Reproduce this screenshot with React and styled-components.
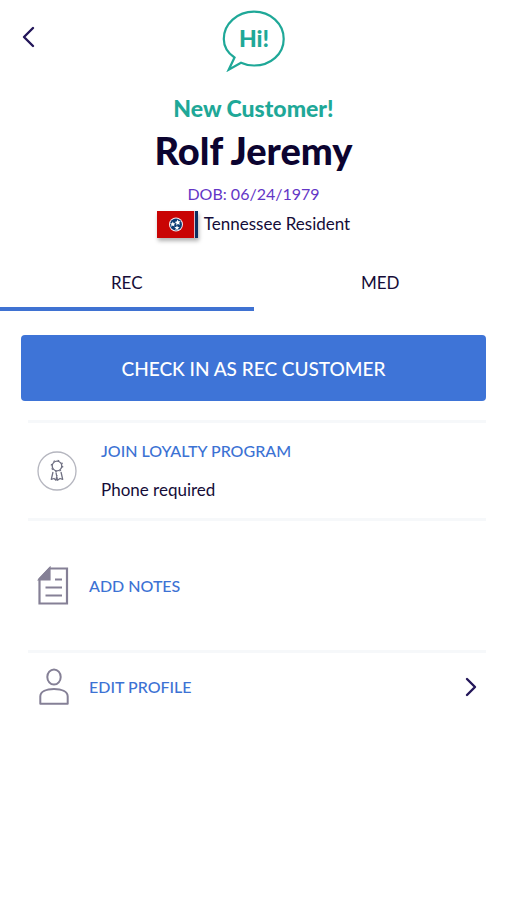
import React, { useState } from 'react'
import styled, { createGlobalStyle } from 'styled-components'

const GlobalStyle = createGlobalStyle`
* {
box-sizing: border-box;
}
body {
margin: 0;
background: #fff;
color: #150c38;
font-family: Lato, 'Open Sans', sans-serif;
}
button {
font-family: inherit;
color: inherit;
background: none;
border: none;
padding: 0;
cursor: pointer;
}
`;

const Page = styled.div`
width: 100%;
`;

const TopBar = styled.header`
display: grid;
grid-template-columns: 1fr auto 1fr;
align-items: start;
padding: 10px 20px 0;
`;

const BackButton = styled.button`
justify-self: start;
display: flex;
margin-top: 16px;
`;

const Customer = styled.section`
display: flex;
flex-direction: column;
align-items: center;
padding-top: 22px;
`;

const Status = styled.p`
margin: 0;
font-size: 23px;
line-height: 28px;
font-weight: 900;
color: #1fa898;
`;

const Name = styled.h1`
margin: 8px 0 0;
font-size: 38px;
line-height: 40px;
font-weight: 900;
color: #0c0430;
`;

const Birth = styled.p`
margin: 14px 0 0;
font-size: 16px;
line-height: 20px;
color: #6336c6;
`;

const Residence = styled.div`
display: flex;
align-items: center;
gap: 6px;
margin-top: 6px;
font-size: 17px;
line-height: 28px;
`;

const Flag = styled.svg`
display: block;
box-shadow: 1px 3px 4px rgba(0, 0, 0, 0.3);
`;

const Tabs = styled.div`
display: grid;
grid-template-columns: 1fr 1fr;
margin-top: 17px;
`;

const Tab = styled.button`
height: 56px;
padding-top: 4px;
font-size: 17px;
line-height: 20px;
border-bottom: 4px solid ${(props) => props.$active ? '#3f72d2' : 'transparent'};
`;

const Content = styled.main`
padding: 24px 21px;
`;

const CheckIn = styled.button`
display: block;
width: 100%;
height: 66px;
border-radius: 4px;
background: #3e74d7;
color: #fff;
font-size: 19px;
font-weight: 500;
`;

const List = styled.div`
margin: 19px 0 0 7px;
`;

const Row = styled.button`
display: flex;
align-items: center;
gap: ${(props) => props.$gap || '19px'};
width: 100%;
height: ${(props) => props.$height};
padding: 0 7px 0 8px;
border-top: 3px solid #f6f8fa;
text-align: left;
`;

const Texts = styled.span`
flex: 1;
display: flex;
flex-direction: column;
gap: 19px;
`;

const Label = styled.span`
font-size: 16px;
line-height: 20px;
font-weight: 500;
color: #3c72d4;
`;

const Info = styled.span`
font-size: 17px;
line-height: 20px;
`;

const Chevron = ({ left }) => (
  <svg width="16" height="22" viewBox="0 0 16 22" fill="none" stroke="#231659" strokeWidth="2.4" strokeLinecap="round" strokeLinejoin="round" aria-hidden="true">
    <path d={left ? 'M13 2L4 11L13 20' : 'M4 3L12 11L4 19'} />
  </svg>
);

const HiBubble = () => (
  <svg width="64" height="62" viewBox="0 0 64 62" role="img" aria-label="Hi!">
    <path
      d="M12.5 47.5C6 43 1.800 36.500 1.800 28.900C1.800 13.900 15.300 1.700 32 1.700C48.700 1.700 61.700 13.900 61.700 28.900C61.700 43.900 48.700 55.500 32 55.500C27.300 55.500 22.800 54.500 19 52.700L6.700 59.700Z"
      fill="#fff"
      stroke="#1fa898"
      strokeWidth="2.200"
    />
    <text x="32" y="37" textAnchor="middle" fontFamily="Lato, sans-serif" fontSize="23" fontWeight="900" fill="#1fa898">Hi!</text>
  </svg>
);

const TennesseeFlag = () => (
  <Flag width="41" height="27" viewBox="0 0 41 27" aria-hidden="true">
    <rect width="41" height="27" fill="#c90404" />
    <rect x="37" width="4" height="27" fill="#d9b8c4" />
    <rect x="38" width="3" height="27" fill="#0c2f60" />
    <circle cx="19" cy="13.500" r="7" fill="#f5e8ec" />
    <circle cx="19" cy="13.500" r="6" fill="#0c3b73" />
    <g fill="#fff">
      <path d="M20.500 8.500l1 1.800 2-.1-1.300 1.600.7 1.900-2-.7-1.600 1.200.1-2-1.700-1.200 2-.5z" />
      <path d="M15.800 10.500l.8 1.800 1.900.1-1.500 1.300.5 1.900-1.700-1-1.700 1.100.4-2-1.500-1.200 2-.2z" />
      <path d="M20 14.300l.7 1.700 1.900.1-1.500 1.200.5 1.900-1.600-1-1.700 1 .5-1.900-1.500-1.200 2-.1z" />
    </g>
  </Flag>
);

const RibbonIcon = () => (
  <svg width="42" height="42" viewBox="0 0 42 42" fill="none" stroke="#6f7082" strokeWidth="1.300" strokeLinejoin="round" aria-hidden="true">
    <circle cx="21" cy="21" r="19" stroke="#b5b6bf" />
    <circle cx="21" cy="16" r="4.800" />
    <circle cx="21" cy="16" r="5.700" strokeWidth="1.200" strokeDasharray="1.600 2.877" />
    <path d="M17 22L15.300 29.300L18 28.500L20 30.200L21 25M25 22L26.700 29.300L24 28.500L21.500 30.200L20 22.500" />
  </svg>
);

const NoteIcon = () => (
  <svg width="34" height="40" viewBox="0 0 34 40" fill="none" stroke="#858096" strokeWidth="2.200" aria-hidden="true">
    <path d="M13.500 2.500H31V37.500H3.500V13Z" />
    <path d="M13.500 2.500V13.500H3.500Z" fill="#858096" />
    <path d="M19 13.500H26M9.500 21.500H26M9.500 29.500H26" />
  </svg>
);

const ProfileIcon = () => (
  <svg width="34" height="40" viewBox="0 0 34 40" fill="none" stroke="#858096" strokeWidth="2" strokeLinejoin="round" aria-hidden="true">
    <ellipse cx="18" cy="10" rx="6.700" ry="7.500" />
    <path d="M4.300 36.800V29.500C4.300 24.300 10.500 22 18 22S31.700 24.300 31.700 29.500V36.800Z" />
  </svg>
);

export default function App() {
  const [tab, setTab] = useState('REC');

  return (
    <Page>
      <GlobalStyle />
      <TopBar>
        <BackButton aria-label="Back"><Chevron left /></BackButton>
        <HiBubble />
      </TopBar>
      <Customer>
        <Status>New Customer!</Status>
        <Name>Rolf Jeremy</Name>
        <Birth>DOB: 06/24/1979</Birth>
        <Residence>
          <TennesseeFlag />
          Tennessee Resident
        </Residence>
      </Customer>
      <Tabs role="tablist">
        {['REC', 'MED'].map((item) => (
          <Tab key={item} role="tab" aria-selected={tab === item} $active={tab === item} onClick={() => setTab(item)}>
            {item}
          </Tab>
        ))}
      </Tabs>
      <Content>
        <CheckIn>CHECK IN AS {tab} CUSTOMER</CheckIn>
        <List>
          <Row $height="98px" $gap="23px">
            <RibbonIcon />
            <Texts>
              <Label>JOIN LOYALTY PROGRAM</Label>
              <Info>Phone required</Info>
            </Texts>
          </Row>
          <Row $height="132px">
            <NoteIcon />
            <Texts><Label>ADD NOTES</Label></Texts>
          </Row>
          <Row $height="70px">
            <ProfileIcon />
            <Texts><Label>EDIT PROFILE</Label></Texts>
            <Chevron />
          </Row>
        </List>
      </Content>
    </Page>
  )
}
